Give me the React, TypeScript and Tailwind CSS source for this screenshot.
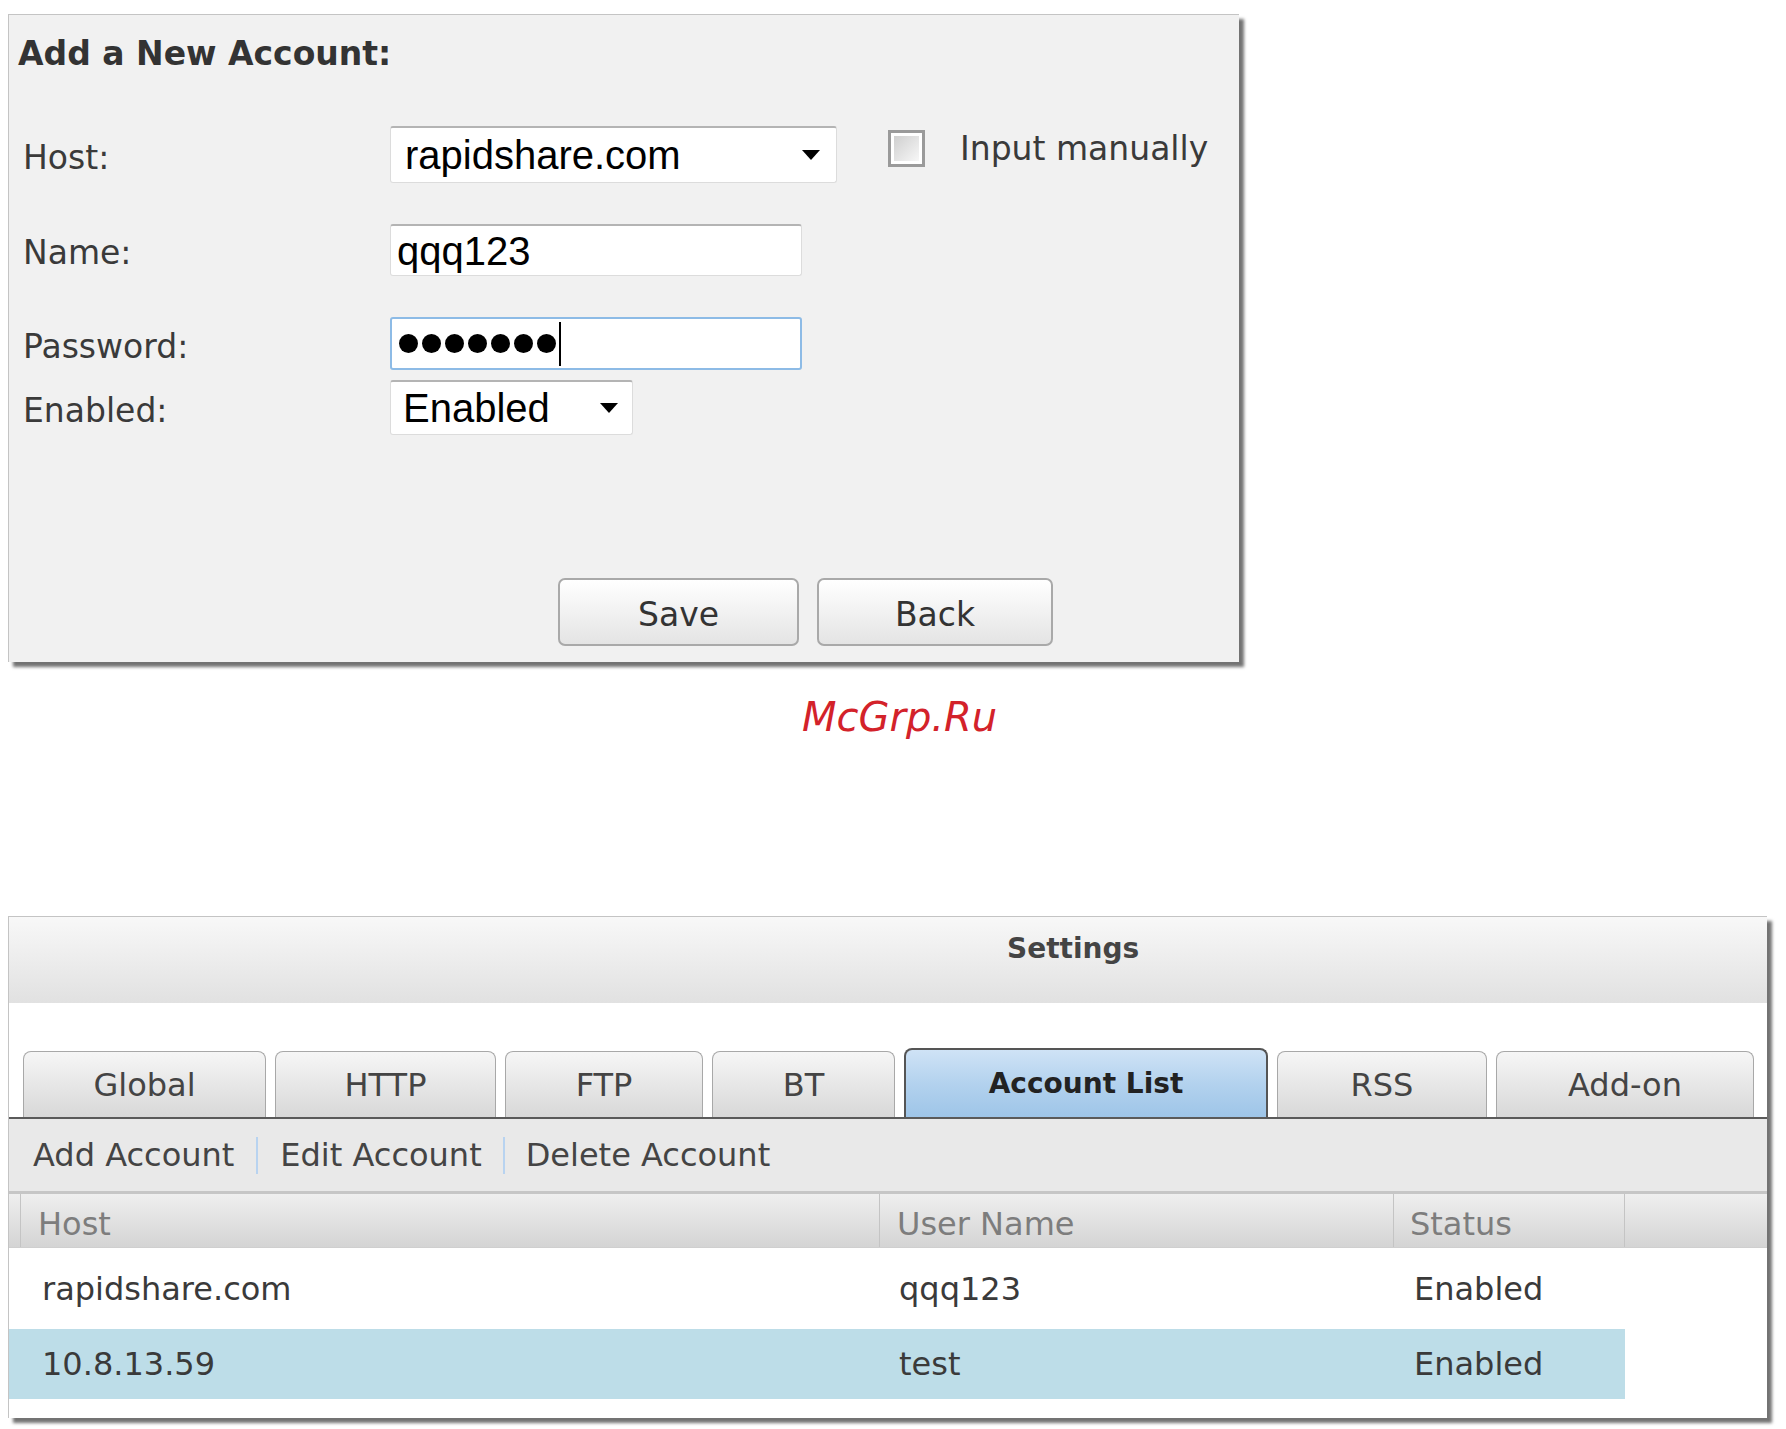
import React from "react";

const sans = "font-['DejaVu_Sans','Verdana',sans-serif]";
const arial = "font-['Liberation_Sans','Arial',sans-serif]";

function Triangle() {
  return <div className="w-0 h-0 border-l-[9px] border-r-[9px] border-t-[10px] border-l-transparent border-r-transparent border-t-black" />;
}

function FieldRow({ label, children, className }: { label: string; children: React.ReactNode; className: string }) {
  return (
    <div className={`flex items-center ${className}`}>
      <div className={`w-[381px] pl-[14px] pt-[6px] text-[33px] text-[#3a3a3a] ${sans}`}>{label}</div>
      {children}
    </div>
  );
}

const tabs = [
  { name: "Global", w: "w-[243px]" },
  { name: "HTTP", w: "w-[221px]" },
  { name: "FTP", w: "w-[198px]" },
  { name: "BT", w: "w-[183px]" },
  { name: "Account List", w: "w-[364px]", active: true },
  { name: "RSS", w: "w-[210px]" },
  { name: "Add-on", w: "w-[258px]" },
];

const rows = [
  { host: "rapidshare.com", user: "qqq123", status: "Enabled", h: "h-[81px]", sel: false },
  { host: "10.8.13.59", user: "test", status: "Enabled", h: "h-[70px]", sel: true },
];

export default function App() {
  return (
    <div className="w-[1786px] h-[1429px] bg-white pt-[14px] pl-[8px] overflow-hidden">
      {/* Add account form */}
      <div className="w-[1231px] h-[648px] bg-[#f1f1f1] border-l border-t border-[#c4c4c4] shadow-[5px_5px_3px_rgba(0,0,0,0.55)] flex flex-col">
        <div className={`pt-[14px] pl-[9px] h-[62px] leading-[50px] text-[33px] font-bold text-[#333] ${sans}`}>Add a New Account:</div>

        <FieldRow label="Host:" className="mt-[49px] h-[57px]">
          <div className="w-[447px] h-[57px] bg-white border border-[#dcdcdc] border-t-2 border-t-[#b4b4b4] rounded-[3px] flex items-center justify-between pl-[14px] pr-[16px]">
            <span className={`text-[40px] text-black ${arial}`}>rapidshare.com</span>
            <Triangle />
          </div>
          <div className="ml-[51px] -mt-[12px] flex items-center">
            <div className="w-[37px] h-[37px] border-[3px] border-[#9a9a9a] bg-white p-[3px]">
              <div className="w-full h-full bg-gradient-to-br from-[#cfcfcf] to-[#f7f7f7]" />
            </div>
            <span className={`ml-[35px] text-[33px] text-[#3a3a3a] ${sans}`}>Input manually</span>
          </div>
        </FieldRow>

        <FieldRow label="Name:" className="mt-[41px] h-[52px]">
          <div className="w-[412px] h-[52px] bg-white border border-[#dcdcdc] border-t-2 border-t-[#b4b4b4] rounded-[3px] flex items-center pl-[6px]">
            <span className={`text-[40px] text-black ${arial}`}>qqq123</span>
          </div>
        </FieldRow>

        <FieldRow label="Password:" className="mt-[41px] h-[53px]">
          <div className="w-[412px] h-[53px] bg-white border-2 border-[#8dbbe6] rounded-[3px] flex items-center pl-[7px]">
            <div className="flex gap-[4px]">
              {[0, 1, 2, 3, 4, 5, 6].map((i) => (
                <div key={i} className="w-[19px] h-[19px] rounded-full bg-black" />
              ))}
            </div>
            <div className="ml-[3px] w-[2px] h-[44px] bg-black" />
          </div>
        </FieldRow>

        <FieldRow label="Enabled:" className="mt-[10px] h-[55px]">
          <div className="w-[243px] h-[55px] bg-white border border-[#dcdcdc] border-t-2 border-t-[#b4b4b4] rounded-[3px] flex items-center justify-between pl-[12px] pr-[14px]">
            <span className={`text-[40px] text-black ${arial}`}>Enabled</span>
            <Triangle />
          </div>
        </FieldRow>

        <div className="mt-[143px] flex pl-[549px] gap-[18px]">
          <button className={`w-[241px] h-[68px] pt-[6px] rounded-[7px] border-2 border-[#a9a9a9] bg-gradient-to-b from-white to-[#e4e4e4] text-[33px] text-[#333] ${sans}`}>Save</button>
          <button className={`w-[236px] h-[68px] pt-[6px] rounded-[7px] border-2 border-[#a9a9a9] bg-gradient-to-b from-white to-[#e4e4e4] text-[33px] text-[#333] ${sans}`}>Back</button>
        </div>
      </div>

      {/* Watermark */}
      <div className={`mt-[30px] pl-[794px] h-[50px] leading-[50px] text-[40px] italic text-[#d3222a] ${sans}`}>McGrp.Ru</div>

      {/* Settings panel */}
      <div className="mt-[174px] w-[1759px] h-[502px] bg-white border-l border-t border-[#c4c4c4] shadow-[5px_5px_3px_rgba(0,0,0,0.55)] flex flex-col">
        <div className="h-[86px] bg-gradient-to-b from-[#f8f8f8] to-[#e1e1e1] pt-[12px]">
          <div className={`pl-[998px] leading-[40px] text-[28px] font-bold text-[#444] ${sans}`}>Settings</div>
        </div>

        <div className="mt-[45px] flex items-end gap-[9px] pl-[14px] h-[69px]">
          {tabs.map((t) =>
            t.active ? (
              <div key={t.name} className={`${t.w} h-[69px] rounded-t-[8px] border-2 border-b-0 border-[#555] bg-gradient-to-b from-[#cfe3f6] via-[#b3d2ee] to-[#9ec5e8] flex items-center justify-center text-[28px] font-bold text-[#222] ${sans}`}>
                {t.name}
              </div>
            ) : (
              <div key={t.name} className={`${t.w} h-[66px] rounded-t-[8px] border border-b-0 border-[#a8a8a8] bg-gradient-to-b from-[#f6f6f6] to-[#d8d8d8] flex items-center justify-center text-[32px] text-[#444] ${sans}`}>
                {t.name}
              </div>
            )
          )}
        </div>
        <div className="h-[2px] bg-[#5a5a5a]" />

        <div className={`h-[75px] bg-[#e9e9e9] border-b-[3px] border-[#c6c6c6] flex items-center pl-[24px] text-[32px] text-[#444] ${sans}`}>
          <span>Add Account</span>
          <div className="mx-[22px] w-[2px] h-[37px] bg-[#b8d3f0]" />
          <span>Edit Account</span>
          <div className="mx-[21px] w-[2px] h-[37px] bg-[#b8d3f0]" />
          <span>Delete Account</span>
        </div>

        <div className={`h-[54px] flex bg-gradient-to-b from-[#efefef] to-[#d4d4d4] border-b border-[#cfcfcf] text-[32px] text-[#7d7d7d] ${sans}`}>
          <div className="w-[12px] border-r border-[#c4c4c4]" />
          <div className="w-[859px] border-r border-[#c4c4c4] flex items-center pl-[17px] pt-[6px]">Host</div>
          <div className="w-[514px] border-r border-[#c4c4c4] flex items-center pl-[17px] pt-[6px]">User Name</div>
          <div className="w-[231px] border-r border-[#c4c4c4] flex items-center pl-[16px] pt-[6px]">Status</div>
          <div className="flex-1" />
        </div>

        {rows.map((r) => (
          <div key={r.host} className={`${r.h} flex text-[32px] text-[#3a3a3a] ${sans}`}>
            <div className={`w-[1616px] flex ${r.sel ? "bg-[#bddde8]" : ""}`}>
              <div className="w-[871px] flex items-center pl-[33px]">{r.host}</div>
              <div className="w-[514px] flex items-center pl-[19px]">{r.user}</div>
              <div className="w-[231px] flex items-center pl-[20px]">{r.status}</div>
            </div>
          </div>
        ))}
      </div>
    </div>
  );
}
